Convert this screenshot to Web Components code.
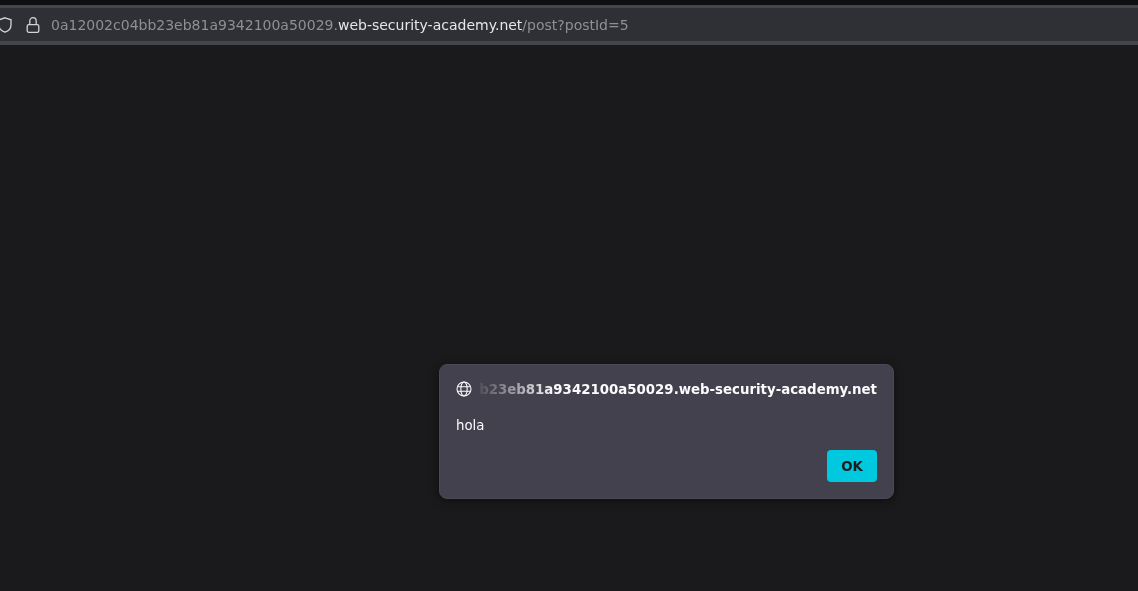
<!DOCTYPE html>
<html>
<head>
<meta charset="utf-8">
<style>
  html, body { margin: 0; height: 100%; background: #1a1a1c; overflow: hidden; }
</style>
</head>
<body>
<browser-window>
  <url-bar slot="bar"></url-bar>
  <alert-dialog origin="b23eb81a9342100a50029.web-security-academy.net">hola</alert-dialog>
</browser-window>

<script>
class BrowserWindow extends HTMLElement {
  constructor() {
    super();
    this.attachShadow({ mode: 'open' });
    this.shadowRoot.innerHTML = `
      <style>
        :host {
          display: flex;
          flex-direction: column;
          position: relative;
          height: 591px;
          background: #1a1a1c;
          font-family: "DejaVu Sans", sans-serif;
        }
        .top { height: 5px; background: #0f0f12; flex: none; }
      </style>
      <div class="top"></div>
      <slot name="bar"></slot>
      <slot></slot>
    `;
  }
}

class UrlBar extends HTMLElement {
  constructor() {
    super();
    this.attachShadow({ mode: 'open' });
    this.shadowRoot.innerHTML = `
      <style>
        :host {
          display: flex;
          align-items: center;
          flex: none;
          height: 33px;
          border-top: 3px solid #45454c;
          border-bottom: 4px solid #45454c;
          background: #2f3036;
          overflow: hidden;
          font-size: 14px;
          color: #8f8f94;
          opacity: .999; /* greyscale text like the reference */
        }
        svg { flex: none; display: block; fill: none; stroke: #d4d4d8; stroke-width: 1.3; }
        .shield { margin-left: -3px; }
        .lock { margin-left: 13px; }
        .url { margin-left: 11px; white-space: nowrap; }
        .host { color: #e6e6e8; }
      </style>
      <svg class="shield" width="16" height="16" viewBox="0 0 16 16">
        <path d="M8 .8 14 2.8v5.2c0 3.400-2.400 5.900-6 7.200-3.600-1.300-6-3.800-6-7.200V2.800z"/>
      </svg>
      <svg class="lock" width="14" height="16" viewBox="0 0 14 16">
        <rect x="1.200" y="7.700" width="11.600" height="7.600" rx="1.600"/>
        <path d="M3.800 7.700V3.900a3.200 3.200 0 0 1 6.400 0v3.800"/>
      </svg>
      <span class="url">0a12002c04bb23eb81a9342100a50029.<span class="host">web-security-academy.net</span>/post?postId=5</span>
    `;
  }
}

class AlertDialog extends HTMLElement {
  constructor() {
    super();
    this.attachShadow({ mode: 'open' });
    this.shadowRoot.innerHTML = `
      <style>
        :host {
          display: block;
          position: absolute;
          left: 439px;
          top: 364px;
          width: 455px;
          height: 135px;
          box-sizing: border-box;
          padding: 15px 16px 16px 16px;
          background: #42414d;
          border: 1px solid #4a4954;
          border-radius: 8px;
          box-shadow: 0 2px 10px rgba(0,0,0,.45);
          color: #fbfbfe;
          font-size: 13.33px;
          opacity: .999;
        }
        .head { display: flex; align-items: center; gap: 7px; height: 17px; }
        .head svg { flex: none; fill: none; stroke: #fbfbfe; stroke-width: 1.1; }
        .origin {
          flex: 1;
          min-width: 0;
          margin-top: 2px;
          white-space: nowrap;
          text-align: right;
          font-weight: bold;
          -webkit-mask-image: linear-gradient(to right, rgba(0,0,0,.08), #000 76px);
          mask-image: linear-gradient(to right, rgba(0,0,0,.08), #000 76px);
        }
        .msg { margin-top: 20px; line-height: 17px; }
        .actions { display: flex; justify-content: flex-end; margin-top: 16px; }
        button {
          width: 50px;
          height: 32px;
          padding: 0;
          border: 0;
          border-radius: 4px;
          background: #00c8de;
          color: #1b1b20;
          font: bold 13.33px "DejaVu Sans", sans-serif;
        }
      </style>
      <div class="head">
        <svg width="16" height="16" viewBox="0 0 16 16">
          <circle cx="8" cy="8" r="7"/>
          <ellipse cx="8" cy="8" rx="3.200" ry="7"/>
          <path d="M1 5.800h14M1 10.200h14"/>
        </svg>
        <span class="origin" id="origin"></span>
      </div>
      <div class="msg"><slot></slot></div>
      <div class="actions"><button>OK</button></div>
    `;
    this.shadowRoot.getElementById('origin').textContent = this.getAttribute('origin');
  }
}

customElements.define('browser-window', BrowserWindow);
customElements.define('url-bar', UrlBar);
customElements.define('alert-dialog', AlertDialog);
</script>
</body>
</html>
